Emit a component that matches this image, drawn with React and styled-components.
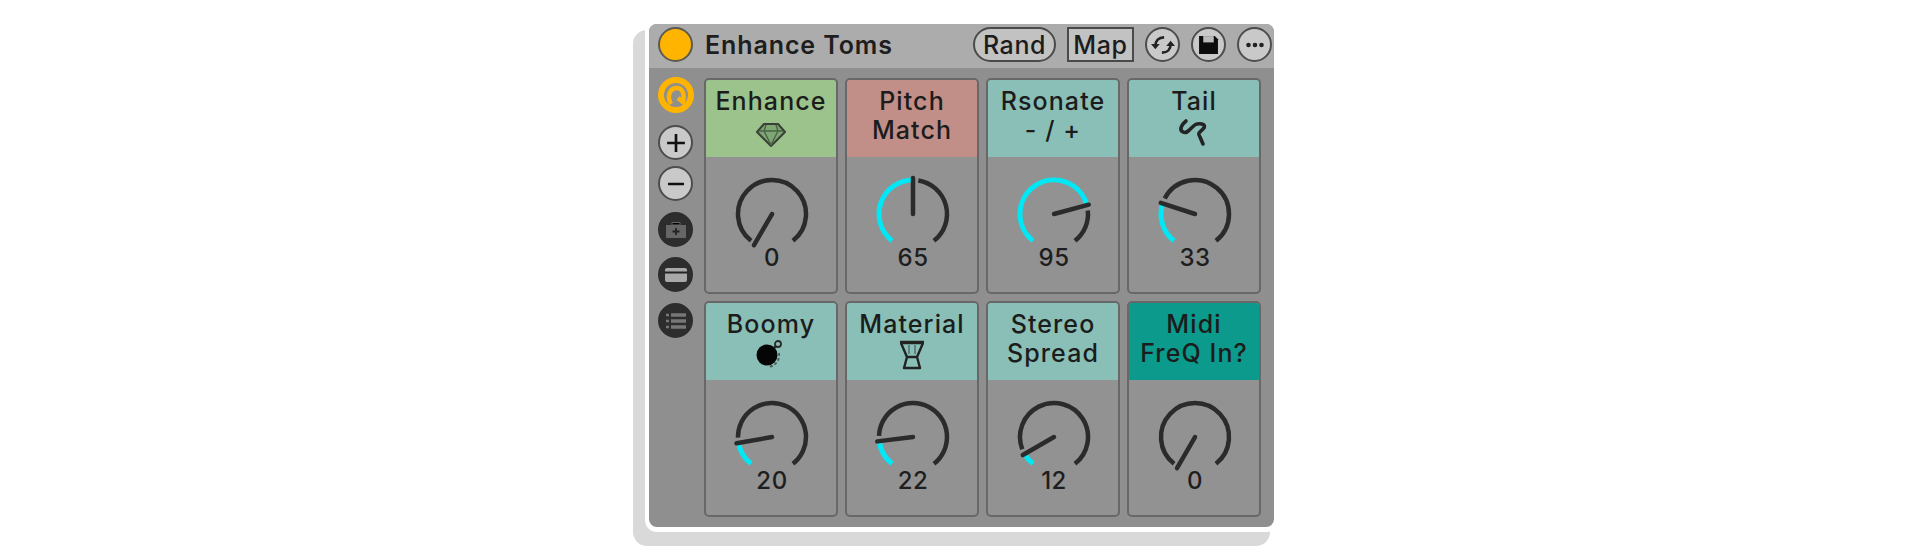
import React from "react";
import styled, { createGlobalStyle } from "styled-components";

const Global = createGlobalStyle`
  html, body { margin: 0; background: #fff; }
  body { width: 1920px; height: 551px; overflow: hidden; font-family: "Inter", "Liberation Sans", sans-serif; }
`;
const Page = styled.div`
  width: 1920px; height: 551px; padding: 20px 642px 0 645px; box-sizing: border-box;
`;
const Frame = styled.div`
  width: 633px; height: 512px; box-sizing: border-box; padding: 4px 4px 5px 4px; background: #fff;
  border-radius: 12px; box-shadow: -10px 12px 0 2px #d9d9d9;
`;
const Device = styled.div`
  height: 100%; display: flex; flex-direction: column; background: #8f8f8f; border-radius: 8px; overflow: hidden;
`;
const TitleBar = styled.div`
  height: 44px; flex: none; background: #acacac; display: flex; align-items: center; padding: 0 2px 3px 9px; box-sizing: border-box;
`;
const Led = styled.div`
  width: 35px; height: 35px; border-radius: 50%; background: #ffb400; border: 2px solid #5d5a52; box-sizing: border-box; margin-right: 12px; flex: none;
`;
const Title = styled.div`
  flex: 1; font-size: 25px; font-weight: 600; color: #1e1e1e; letter-spacing: .9px; white-space: nowrap;
`;
const Pill = styled.div`
  height: 35px; width: ${p => p.$w}px; display: flex; align-items: center; justify-content: center; background: #c2c2c2; color: #1c1c1c; font-size: 25px; font-weight: 500;
  border: 2px solid #4a4a4a; box-sizing: border-box; border-radius: ${p => (p.$round ? "18px" : "0")}; margin-right: 11px; letter-spacing: .6px; flex: none;
`;
const RoundBtn = styled.div`
  width: 35px; height: 35px; border-radius: 50%; background: ${p => p.$dark ? "#2d2d2d" : "#c9c9c9"}; border: 2px solid ${p => p.$dark ? "#2d2d2d" : "#4d4d4d"};
  box-sizing: border-box; display: flex; align-items: center; justify-content: center; margin-left: ${p => p.$ml || 0}px; flex: none;
`;
const Body = styled.div`
  flex: 1; display: flex; min-height: 0; padding: 9px 0 0 9px;
`;
const Side = styled.div`
  width: 46px; flex: none; display: flex; flex-direction: column; align-items: flex-start;
`;
const SideSlot = styled.div`
  height: ${p => p.$h}px; display: flex; align-items: flex-start; flex: none;
`;
const Grid = styled.div`
  display: grid; grid-template-columns: repeat(4, 134px); grid-template-rows: repeat(2, 216px); gap: 7px 7px; margin-top: 1px;
`;
const Card = styled.div`
  border: 2px solid #686868; border-radius: 5px; overflow: hidden; display: flex; flex-direction: column; box-sizing: border-box; background: #929292;
`;
const Head = styled.div`
  height: 77px; flex: none; background: ${p => p.$c}; display: flex; flex-direction: column; align-items: center; padding-top: 7px; box-sizing: border-box;
  color: #1c1c1c; font-size: 25px; font-weight: 500; line-height: 29px; letter-spacing: 1.1px; white-space: nowrap;
`;
const IconBox = styled.svg`
  display: block; flex: none; overflow: visible;
`;
const KnobArea = styled.div`
  flex: 1; display: flex; flex-direction: column; align-items: center; padding: 12px 0 0 2px; box-sizing: border-box;
`;
const Value = styled.div`
  color: #1e1e1e; font-size: 24px; font-weight: 500; line-height: 24px; margin-top: -13px; letter-spacing: .5px;
`;

const pt = (a, r) => {
  const t = (a * Math.PI) / 180;
  return [45 + r * Math.sin(t), 45 - r * Math.cos(t)];
};
const arc = (a, b, r) => {
  const [x1, y1] = pt(a, r);
  const [x2, y2] = pt(b, r);
  return `M${x1} ${y1}A${r} ${r} 0 ${b - a > 180 ? 1 : 0} 1 ${x2} ${y2}`;
};

function Knob({ needle, end }) {
  const start = -142;
  const from = end != null ? needle + 9 : start;
  const tip = pt(needle, 36);
  return (
    <svg width="90" height="90" viewBox="0 0 90 90">
      <path d={arc(from, 142, 34)} fill="none" stroke="#2b2b2b" strokeWidth="4.5" />
      {end != null && <path d={arc(start, end, 34)} fill="none" stroke="#00e8f5" strokeWidth="5" />}
      <line x1="45" y1="45" x2={tip[0]} y2={tip[1]} stroke="#2b2b2b" strokeWidth="4.5" strokeLinecap="round" />
    </svg>
  );
}

const Icon = ({ children }) => (
  <IconBox width="30" height="30" viewBox="0 0 30 30" fill="none">{children}</IconBox>
);
const Gem = () => (
  <Icon>
    <path d="M8 8h14l7 8-14 14L1 16z" fill="#7fa673" stroke="#3a3f38" strokeWidth="2" strokeLinejoin="round" />
    <path d="M3 15h24M10 9l-2 6 7 14 7-14-2-6" stroke="#4b6446" strokeWidth="1.4" />
  </Icon>
);
const Squiggle = () => (
  <Icon>
    <path d="M7 5C2 9 0 14 4 16C9 19 13 9 18 8C23 7 28 9 24 13C21 16 18 17 21 21L24 28" stroke="#242424" strokeWidth="3.600" strokeLinecap="round" strokeLinejoin="round" />
  </Icon>
);
const Bomb = () => (
  <Icon>
    <circle cx="11" cy="16" r="10.500" fill="#050505" />
    <path d="M18 9l2-2" stroke="#222" strokeWidth="2.500" />
    <circle cx="22" cy="5" r="3" stroke="#2a2a2a" strokeWidth="1.800" />
    <path d="M23 14a12 12 0 0 1-11 14" stroke="#4a5a56" strokeWidth="1.800" strokeDasharray="3 2" />
  </Icon>
);
const Drum = () => (
  <Icon>
    <path d="M4 4L10 18H20L26 4M10 18L7 29H23L20 18" stroke="#222" strokeWidth="2.400" strokeLinejoin="round" />
    <path d="M3 3.500h24" stroke="#222" strokeWidth="3.500" />
    <path d="M12 6v9M18 6v9" stroke="#4a6a64" strokeWidth="1.400" />
  </Icon>
);

const cards = [
  { a: "Enhance", icon: <Gem />, c: "#9cc38b", v: "0", n: -150 },
  { a: "Pitch", b: "Match", c: "#c18f87", v: "65", n: 0, e: 0 },
  { a: "Rsonate", b: "- / +", c: "#89bfb6", v: "95", n: 75, e: 75 },
  { a: "Tail", icon: <Squiggle />, c: "#89bfb6", v: "33", n: -72, e: -72 },
  { a: "Boomy", icon: <Bomb />, c: "#89bfb6", v: "20", n: -100, e: -100 },
  { a: "Material", icon: <Drum />, c: "#89bfb6", v: "22", n: -97, e: -97 },
  { a: "Stereo", b: "Spread", c: "#89bfb6", v: "12", n: -120, e: -120 },
  { a: "Midi", b: "FreQ In?", c: "#0b9a8b", v: "0", n: -150 },
];

export default function App() {
  return (
    <Page>
      <Global />
      <Frame>
        <Device>
          <TitleBar>
            <Led />
            <Title>Enhance Toms</Title>
            <Pill $round $w={83}>Rand</Pill>
            <Pill $w={67}>Map</Pill>
            <RoundBtn>
              <svg width="24" height="24" viewBox="0 0 22 22" fill="none">
                <path d="M4 12C4 7 7 4 12 4M18 10c0 5-3 8-8 8" stroke="#222" strokeWidth="2.400" />
                <path d="M0 10h8l-4 5zM14 12h8l-4-5z" fill="#222" />
              </svg>
            </RoundBtn>
            <RoundBtn $ml={11}>
              <svg width="21" height="21" viewBox="0 0 20 20"><path d="M1 2h15l3 3v14H1z" fill="#0c0c0c" /><rect x="5" y="2" width="10" height="6" fill="#bbb" /></svg>
            </RoundBtn>
            <RoundBtn $ml={11}>
              <svg width="20" height="8" viewBox="0 0 20 8"><circle cx="3.500" cy="4" r="2.300" fill="#222" /><circle cx="10" cy="4" r="2.300" fill="#222" /><circle cx="16.500" cy="4" r="2.300" fill="#222" /></svg>
            </RoundBtn>
          </TitleBar>
          <Body>
            <Side>
              <SideSlot $h={48}>
                <svg width="36" height="36" viewBox="0 0 36 36" fill="none">
                  <circle cx="18" cy="18" r="15" stroke="#ffb400" strokeWidth="6" />
                  <path d="M13 27C9 20 11 12 18 11C24 10 27 17 25 25L20 21" stroke="#ffb400" strokeWidth="4.500" />
                </svg>
              </SideSlot>
              <SideSlot $h={41}>
                <RoundBtn><svg width="20" height="20" viewBox="0 0 18 18"><path d="M9 1v16M1 9h16" stroke="#111" strokeWidth="2.400" /></svg></RoundBtn>
              </SideSlot>
              <SideSlot $h={46}>
                <RoundBtn><svg width="20" height="4" viewBox="0 0 18 4"><path d="M1 2h16" stroke="#111" strokeWidth="2.400" /></svg></RoundBtn>
              </SideSlot>
              <SideSlot $h={45}>
                <RoundBtn $dark><svg width="22" height="18" viewBox="0 0 22 18"><path d="M1 4h20v13H1z" fill="#666" /><path d="M7 1.500h8V4H7z" stroke="#666" /><path d="M11 7v7M7.500 10.500h7" stroke="#222" strokeWidth="1.800" /></svg></RoundBtn>
              </SideSlot>
              <SideSlot $h={46}>
                <RoundBtn $dark><svg width="24" height="16" viewBox="0 0 24 16"><rect x="1" y="1" width="22" height="14" rx="2" fill="#a8a8a8" /><path d="M1 5.500h22" stroke="#222" strokeWidth="2" /></svg></RoundBtn>
              </SideSlot>
              <SideSlot $h={40}>
                <RoundBtn $dark><svg width="22" height="16" viewBox="0 0 22 16"><path d="M6 2h15M6 8h15M6 14h15" stroke="#777" strokeWidth="3.500" /><path d="M1 2h3M1 8h3M1 14h3" stroke="#777" strokeWidth="2.500" /></svg></RoundBtn>
              </SideSlot>
            </Side>
            <Grid>
              {cards.map((k, i) => (
                <Card key={i}>
                  <Head $c={k.c}>
                    <div>{k.a}</div>
                    {k.b ? <div>{k.b}</div> : k.icon}
                  </Head>
                  <KnobArea>
                    <Knob needle={k.n} end={k.e} />
                    <Value>{k.v}</Value>
                  </KnobArea>
                </Card>
              ))}
            </Grid>
          </Body>
        </Device>
      </Frame>
    </Page>
  );
}
